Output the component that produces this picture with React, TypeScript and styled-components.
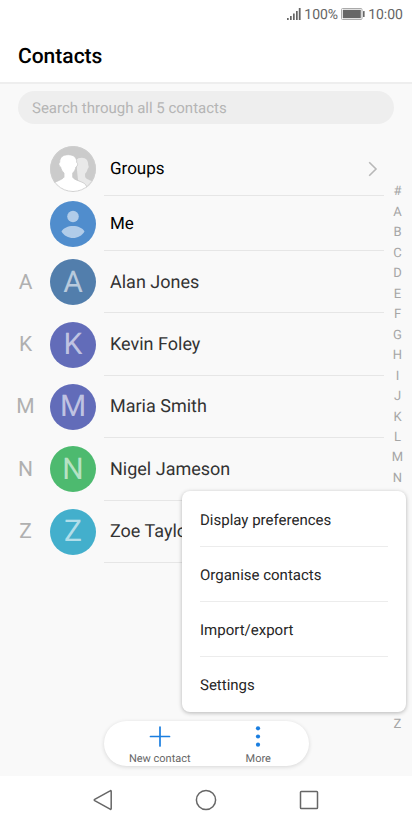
import React from "react";
import styled, { createGlobalStyle } from "styled-components";

const GlobalStyle = createGlobalStyle`
  *, *::before, *::after { box-sizing: border-box; }
  body {
    margin: 0;
    background: #fff;
    font-family: Roboto, "Noto Sans", sans-serif;
    text-rendering: geometricPrecision;
  }
  button { font: inherit; color: inherit; text-rendering: inherit; background: none; border: 0; padding: 0; cursor: pointer; }
  ul, ol { list-style: none; margin: 0; padding: 0; }
  svg { display: block; flex: none; }
`;

const Page = styled.div`
  display: flex;
  flex-direction: column;
  min-height: 100vh;
`;

const StatusBar = styled.div`
  display: flex;
  align-items: center;
  justify-content: flex-end;
  gap: 3px;
  height: 28px;
  padding: 0 9px;
  font-size: 14px;
  line-height: 18px;
  color: #666;
`;

const StatusText = styled.span`
  padding-top: 1px;
`;

const Header = styled.header`
  display: flex;
  align-items: center;
  height: 56px;
  padding: 4px 18px 0;
  border-bottom: 2px solid #eee;
`;

const Title = styled.h1`
  margin: 0;
  font-size: 21px;
  line-height: 24px;
  font-weight: 500;
  color: #000;
`;

const Main = styled.main`
  position: relative;
  flex: 1;
  padding-top: 7px;
  background: #f9f9f9;
`;

const Search = styled.input`
  display: block;
  width: calc(100% - 36px);
  height: 33px;
  margin: 0 18px;
  padding: 0 14px;
  border: 0;
  border-radius: 17px;
  background: #eee;
  font: 15px Roboto, sans-serif;
  text-rendering: inherit;
  color: #333;
  outline: none;
  &::placeholder { color: #b5b5b5; opacity: 1; }
`;

const Directory = styled.div`
  display: grid;
  grid-template-columns: 1fr 28px;
  align-items: start;
  margin-top: 17px;
`;

const ShortcutList = styled.ul`
  display: grid;
  grid-auto-rows: 55px;
`;

const ContactList = styled.ul`
  display: grid;
  grid-auto-rows: 1fr;
  min-height: 312px;
`;

const Item = styled.li`
  display: grid;
`;

const Row = styled.button`
  display: grid;
  grid-template-columns: 50px 46px 1fr;
  align-items: center;
  text-align: left;
`;

const Initial = styled.span`
  padding: 1px 0 0 1px;
  font-size: 21px;
  line-height: 26px;
  text-align: center;
  color: #b0b0b0;
`;

const Avatar = styled.span<{ $color: string }>`
  display: flex;
  align-items: center;
  justify-content: center;
  width: 46px;
  height: 46px;
  border-radius: 50%;
  overflow: hidden;
  background: ${(p) => p.$color};
  color: rgba(255, 255, 255, 0.6);
  font-size: 30px;
  line-height: 46px;
`;

const AvatarLetter = styled.span`
  padding-top: 1px;
`;

const Name = styled.span<{ $strong?: boolean }>`
  display: flex;
  align-items: center;
  justify-content: space-between;
  align-self: stretch;
  margin-left: 8px;
  padding: 2px 6px 0;
  border-bottom: 1px solid #e6e6e6;
  font-size: ${(p) => (p.$strong ? 17 : 18)}px;
  line-height: 22px;
  color: ${(p) => (p.$strong ? "#000" : "#333")};
`;

const AlphabetIndex = styled.ol`
  display: grid;
  grid-auto-rows: 1fr;
  height: 553px;
  margin-top: 41px;
  padding-right: 1px;
`;

const IndexItem = styled.li`
  display: grid;
`;

const IndexButton = styled.button`
  display: flex;
  align-items: center;
  justify-content: center;
  font-size: 13px;
  line-height: 16px;
  color: #a6a6a6;
`;

const Menu = styled.div`
  position: absolute;
  right: 6px;
  bottom: 64px;
  z-index: 2;
  display: grid;
  grid-auto-rows: 1fr;
  width: 224px;
  height: 221px;
  padding: 1px 18px 0;
  border-radius: 8px;
  background: #fff;
  box-shadow: 0 1px 4px rgba(0, 0, 0, 0.28);
`;

const MenuItem = styled.button`
  padding-top: 1px;
  text-align: left;
  font-size: 15px;
  line-height: 18px;
  color: #262626;
  &:not(:last-child) { border-bottom: 1px solid #ececec; }
`;

const ActionDock = styled.div`
  position: absolute;
  left: 0;
  right: 0;
  bottom: 10px;
  display: flex;
  width: 205px;
  height: 45px;
  margin: 0 auto;
  padding: 0 1px 0 7px;
  border-radius: 23px;
  background: #fff;
  box-shadow: 0 1px 4px rgba(0, 0, 0, 0.14);
`;

const Action = styled.button`
  flex: 1 1 0;
  display: flex;
  flex-direction: column;
  align-items: center;
  justify-content: flex-start;
  gap: 5px;
  padding-top: 4px;
  font-size: 11px;
  line-height: 14px;
  color: #666;
`;

const NavBar = styled.nav`
  display: flex;
  align-items: center;
  justify-content: center;
  gap: 79px;
  height: 48px;
  background: #fff;
`;

const NavButton = styled.button`
  width: 24px;
  height: 24px;
`;

const SignalIcon = () => (
  <svg width="14" height="14" viewBox="0 0 14 14" fill="#666" aria-hidden="true">
    <rect x="0" y="11" width="1.7" height="2" />
    <rect x="3" y="9" width="1.7" height="4" />
    <rect x="6" y="6.5" width="1.7" height="6.5" />
    <rect x="9" y="4" width="1.7" height="9" />
    <rect x="11.8" y="1" width="1.8" height="12" />
  </svg>
);

const BatteryIcon = () => (
  <svg width="24" height="12" viewBox="0 0 24 12" aria-hidden="true">
    <rect x="0.5" y="0.5" width="20.5" height="11" rx="1" fill="#fff" stroke="#aaa" />
    <rect x="1.8" y="1.8" width="18" height="8.4" fill="#666" />
    <rect x="22" y="3" width="1.6" height="6" rx="0.5" fill="#666" />
  </svg>
);

const GroupsIcon = () => (
  <svg width="46" height="46" viewBox="0 0 46 46" aria-hidden="true">
    <path
      d="M26 14.5c1.3-2 3.2-2.7 5.6-2.7 4.8 0 6.8 3 6.6 7.4.9.8.6 2.7-.5 3.5-.5 2.2-1.5 3.8-2.6 5v2.8c.4 2.8 5 3.7 9 5.4L38 44 28 34z"
      fill="#e9e9e9"
    />
    <path
      d="M1 39c2-3 11-4.8 13-7.8v-4.2c-1.7-1.5-2.9-3.6-3.4-6.1-2-.7-2.3-3.7-.9-4.6C9.6 11.5 12.7 8.7 18.2 8.7c5.7 0 8.7 2.9 8.5 7.7 1.5.9 1.1 3.9-.8 4.6-.5 2.5-1.5 4.5-3.2 6.1v4.1c1.5 2.9 8.8 4.1 12 6.5 1.7 1.4 2 3.8 2.6 5.6L24 49 7 46z"
      fill="#fff"
      stroke="#c9c9c9"
      strokeWidth="0.8"
    />
    <circle cx="23" cy="23" r="22.5" fill="none" stroke="#cfcfcf" />
  </svg>
);

const PersonIcon = () => (
  <svg width="46" height="46" viewBox="0 0 46 46" fill="#b1cce9" aria-hidden="true">
    <circle cx="23" cy="15.5" r="5.8" />
    <path d="M11.5 30.5C13.5 26.9 18 25 23 25s9.5 1.9 11.5 5.5C32 34.7 27.7 37 23 37s-9-2.3-11.5-6.5z" />
  </svg>
);

const ChevronIcon = () => (
  <svg width="10" height="16" viewBox="0 0 10 16" fill="none" stroke="#b8b8b8" strokeWidth="1.6" aria-hidden="true">
    <path d="M1.2 1.2 8 8 1.2 14.8" />
  </svg>
);

const PlusIcon = () => (
  <svg width="22" height="22" viewBox="0 0 22 22" stroke="#1a7ee0" strokeWidth="1.7" strokeLinecap="round" aria-hidden="true">
    <path d="M11 2v19M1.5 11.5h19" />
  </svg>
);

const DotsIcon = () => (
  <svg width="22" height="22" viewBox="0 0 22 22" fill="#1a7ee0" aria-hidden="true">
    <circle cx="11" cy="3.3" r="2.1" />
    <circle cx="11" cy="11.5" r="2.1" />
    <circle cx="11" cy="19.7" r="2.1" />
  </svg>
);

const navShapes = [
  { label: "Back", shape: <path d="M20.2 3.4v17.2c0 .7-.5 1-1.1.6L3.7 12.6c-.6-.4-.6-.8 0-1.2L19.1 2.8c.6-.4 1.1-.1 1.1.6z" /> },
  { label: "Home", shape: <circle cx="12" cy="12" r="9.6" /> },
  { label: "Recent apps", shape: <rect x="3.5" y="3.5" width="17" height="17" rx="0.8" /> },
];

const contacts = [
  { name: "Alan Jones", color: "#527eac" },
  { name: "Kevin Foley", color: "#626cb9" },
  { name: "Maria Smith", color: "#626cb9" },
  { name: "Nigel Jameson", color: "#4dba6f" },
  { name: "Zoe Taylor", color: "#43afcc" },
];

const menuItems = ["Display preferences", "Organise contacts", "Import/export", "Settings"];

export default function App() {
  return (
    <Page>
      <GlobalStyle />
      <StatusBar>
        <SignalIcon />
        <StatusText>100%</StatusText>
        <BatteryIcon />
        <StatusText>10:00</StatusText>
      </StatusBar>
      <Header>
        <Title>Contacts</Title>
      </Header>
      <Main>
        <Search type="search" aria-label="Search contacts" placeholder={`Search through all ${contacts.length} contacts`} />
        <Directory>
          <div>
            <ShortcutList>
              <Item>
                <Row>
                  <span />
                  <Avatar $color="#cbcbcb"><GroupsIcon /></Avatar>
                  <Name $strong>Groups<ChevronIcon /></Name>
                </Row>
              </Item>
              <Item>
                <Row>
                  <span />
                  <Avatar $color="#508dcd"><PersonIcon /></Avatar>
                  <Name $strong>Me</Name>
                </Row>
              </Item>
            </ShortcutList>
            <ContactList>
              {contacts.map(({ name, color }) => (
                <Item key={name}>
                  <Row>
                    <Initial>{name[0]}</Initial>
                    <Avatar $color={color}><AvatarLetter>{name[0]}</AvatarLetter></Avatar>
                    <Name>{name}</Name>
                  </Row>
                </Item>
              ))}
            </ContactList>
          </div>
          <AlphabetIndex aria-label="Alphabet index">
            {[..."#ABCDEFGHIJKLMNOPQRSTUVWXYZ"].map((letter) => (
              <IndexItem key={letter}>
                <IndexButton>{letter}</IndexButton>
              </IndexItem>
            ))}
          </AlphabetIndex>
        </Directory>
        <ActionDock>
          <Action><PlusIcon />New contact</Action>
          <Action><DotsIcon />More</Action>
        </ActionDock>
        <Menu role="menu" aria-label="More">
          {menuItems.map((label) => (
            <MenuItem key={label} role="menuitem">{label}</MenuItem>
          ))}
        </Menu>
      </Main>
      <NavBar aria-label="System navigation">
        {navShapes.map(({ label, shape }) => (
          <NavButton key={label} aria-label={label}>
            <svg width="24" height="24" viewBox="0 0 24 24" fill="none" stroke="#666" strokeWidth="1.5">{shape}</svg>
          </NavButton>
        ))}
      </NavBar>
    </Page>
  );
}
